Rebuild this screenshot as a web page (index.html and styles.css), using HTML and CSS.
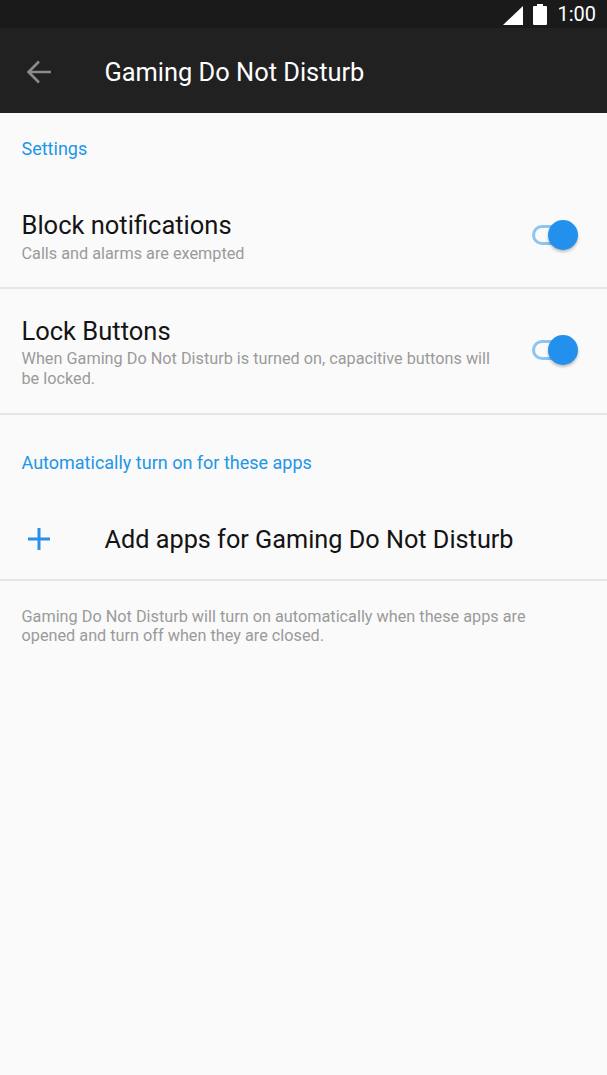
FILE: index.html
```html
<!DOCTYPE html>
<html lang="en">
<head>
    <meta charset="UTF-8">
    <meta name="viewport" content="width=device-width, initial-scale=1.0">
    <title>Gaming Do Not Disturb</title>
    <link rel="stylesheet" href="styles.css">
</head>
<body>
    <div class="status-bar">
        <svg class="signal" width="22" height="20" viewBox="0 0 22 20"><path d="M21 1V20H1z" fill="#fff"/></svg>
        <svg class="battery" width="14" height="21" viewBox="0 0 14 21"><path d="M4 0h6v2h3a1 1 0 0 1 1 1v17a1 1 0 0 1-1 1H1a1 1 0 0 1-1-1V3a1 1 0 0 1 1-1h3z" fill="#fff"/></svg>
        <span class="clock">1:00</span>
    </div>
    <div class="toolbar">
        <svg class="back" width="26" height="24" viewBox="0 0 26 24"><path d="M25 12H3M13 1.500 2.500 12 13 22.500" fill="none" stroke="#8a8a8a" stroke-width="2.600"/></svg>
        <h1>Gaming Do Not Disturb</h1>
    </div>

    <h2 class="section first">Settings</h2>
    <div class="row row-block">
        <div class="row-text">
            <div class="row-title">Block notifications</div>
            <div class="row-sub">Calls and alarms are exempted</div>
        </div>
        <div class="switch"><span class="track"></span><span class="thumb"></span></div>
    </div>
    <div class="row row-lock">
        <div class="row-text">
            <div class="row-title">Lock Buttons</div>
            <div class="row-sub">When Gaming Do Not Disturb is turned on, capacitive buttons will be locked.</div>
        </div>
        <div class="switch"><span class="track"></span><span class="thumb"></span></div>
    </div>

    <h2 class="section second">Automatically turn on for these apps</h2>
    <div class="add-row">
        <svg class="plus" width="22" height="22" viewBox="0 0 22 22"><path d="M11 0v22M0 11h22" stroke="#2b8ee8" stroke-width="3" fill="none"/></svg>
        <span>Add apps for Gaming Do Not Disturb</span>
    </div>
    <p class="note">Gaming Do Not Disturb will turn on automatically when these apps are opened and turn off when they are closed.</p>
</body>
</html>
```

FILE: styles.css
```css
html, body { height: 100%; }
body { margin: 0; background: #fafafa; font-family: Roboto, sans-serif; overflow: hidden; }

.status-bar { height: 28px; background: #1a1a1a; display: flex; align-items: center; justify-content: flex-end; padding-right: 11px; color: #fff; }
.signal { margin-right: 9px; margin-top: 2px; }
.battery { margin-right: 10px; }
.clock { font-size: 20px; }

.toolbar { height: 85px; box-sizing: border-box; padding: 3px 0 0 26px; background: #212121; display: flex; align-items: center; }
.toolbar h1 { margin: 0 0 0 52.500px; font-size: 25.400px; font-weight: 400; color: #fff; }
.back { flex: none; }

.section { margin: 0; padding-left: 21.500px; font-size: 18px; font-weight: 400; line-height: 21px; color: #2196e8; }
.section.first { padding-top: 25px; }
.section.second { padding-top: 37px; }

.row { display: flex; align-items: center; justify-content: space-between; padding: 0 29px 0 21.500px; border-bottom: 2px solid #e6e6e6; }
.row-block { height: 103px; padding-top: 25px; }
.row-block .row-text { padding-top: 4px; }
.row-lock { height: 124px; }
.row-lock .row-text { padding-top: 3px; }
.row-lock .row-title { margin-bottom: 3px; }
.row-text { width: 480px; }
.row-title { margin-bottom: 4px; font-size: 25.500px; line-height: 29px; color: #141414; }
.row-sub { font-size: 16.250px; line-height: 19.500px; color: #9a9a9a; }

.switch { position: relative; width: 46px; height: 30px; margin-bottom: 2px; flex: none; }
.track { position: absolute; left: 0; top: 5px; width: 42px; height: 20px; box-sizing: border-box; border: 3px solid #8fc4f0; border-radius: 10px; }
.thumb { position: absolute; left: 16px; top: 0; width: 30px; height: 30px; border-radius: 50%; background: #2390ee; box-shadow: 0 2px 3px rgba(0, 0, 0, 0.25); }

.add-row { height: 108px; box-sizing: border-box; padding: 27px 0 0 28px; display: flex; align-items: center; border-bottom: 2px solid #e6e6e6; font-size: 25.250px; color: #141414; }
.add-row span { margin-left: 54.500px; }
.plus { flex: none; margin-bottom: 2px; }

.note { margin: 0; padding: 26px 60px 0 21.500px; font-size: 16.250px; line-height: 19px; color: #9a9a9a; }
```
